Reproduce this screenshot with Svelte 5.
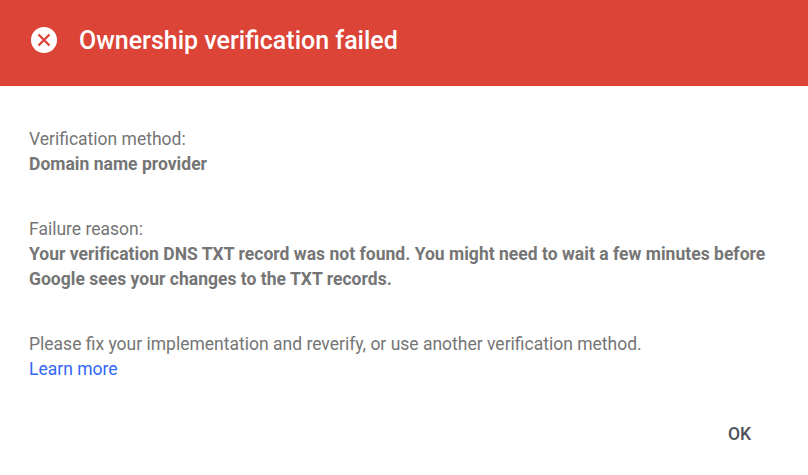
<script>
  const sections = [
    { label: "Verification method:", value: ["Domain name provider"] },
    {
      label: "Failure reason:",
      value: [
        "Your verification DNS TXT record was not found. You might need to wait a few minutes before",
        "Google sees your changes to the TXT records."
      ]
    }
  ];
</script>

<div class="dialog">
  <header class="banner">
    <svg class="icon" width="26" height="26" viewBox="0 0 26 26" aria-hidden="true">
      <circle cx="13" cy="13" r="13" fill="#fff" />
      <path d="M7.5 7.5l11 11M18.5 7.5l-11 11" stroke="#dd4539" stroke-width="2.4" fill="none" />
    </svg>
    <h1>Ownership verification failed</h1>
  </header>

  <div class="content">
    {#each sections as s}
      <section>
        <div>{s.label}</div>
        {#each s.value as line}
          <div class="strong">{line}</div>
        {/each}
      </section>
    {/each}
    <section>
      <div>Please fix your implementation and reverify, or use another verification method.</div>
      <a href="#learn">Learn more</a>
    </section>
  </div>

  <div class="actions">
    <button>OK</button>
  </div>
</div>

<style>
  :global(body) {
    margin: 0;
    background: #fff;
  }

  .dialog {
    width: 808px;
    height: 475px;
    font-family: Roboto, "Liberation Sans", sans-serif;
    overflow: hidden;
  }

  .banner {
    display: flex;
    align-items: center;
    gap: 22px;
    height: 86px;
    padding: 0 0 6px 31px;
    box-sizing: border-box;
    background-color: #dc4438;
    color: #fff;
  }

  h1 {
    margin: 0;
    font-size: 25px;
    font-weight: 500;
  }

  .content {
    padding: 41px 29px 0;
    font-size: 17.5px;
    line-height: 25px;
    color: #757575;
  }

  section {
    margin-bottom: 40px;
    white-space: nowrap;
  }

  .strong {
    font-weight: 700;
    letter-spacing: 0.02px;
  }

  a {
    color: #3367f6;
    text-decoration: none;
  }

  .actions {
    display: flex;
    justify-content: flex-end;
    padding-right: 57px;
  }

  button {
    padding: 0;
    border: none;
    background: none;
    font: 500 17.5px/25px Roboto, "Liberation Sans", sans-serif;
    color: #4d5156;
  }
</style>
